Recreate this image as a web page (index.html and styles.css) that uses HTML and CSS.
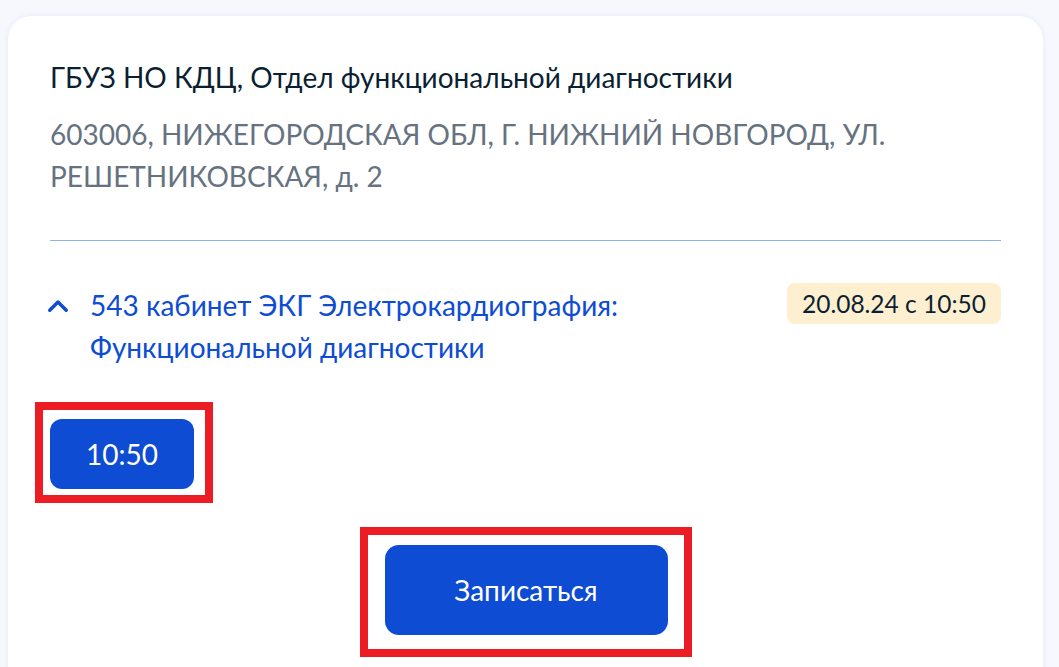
FILE: index.html
```html
<!DOCTYPE html>
<html lang="ru">
<head>
<meta charset="utf-8">
<title>Запись</title>
<link rel="stylesheet" href="styles.css">
</head>
<body>
<div class="card">
  <p class="org">ГБУЗ НО КДЦ, Отдел функциональной диагностики</p>
  <p class="addr">603006, НИЖЕГОРОДСКАЯ ОБЛ, Г. НИЖНИЙ НОВГОРОД, УЛ. РЕШЕТНИКОВСКАЯ, д. 2</p>
  <div class="divider"></div>
  <div class="acc">
    <div class="acc-head">
      <svg class="chev" width="24" height="24" viewBox="0 0 24 24"><polyline points="3.75,17.25 12,9 20.25,17.25" fill="none" stroke="#0d4cd3" stroke-width="3.5" stroke-linecap="round" stroke-linejoin="round"/></svg>
      <span class="acc-title">543 кабинет ЭКГ Электрокардиография: Функциональной диагностики</span>
    </div>
    <span class="badge">20.08.24 с 10:50</span>
  </div>
  <div class="slots">
    <div class="mark mark-slot"><button class="slot">10:50</button></div>
  </div>
  <div class="submit-row">
    <div class="mark mark-submit"><button class="submit">Записаться</button></div>
  </div>
</div>
</body>
</html>
```
FILE: styles.css
```css
* { box-sizing: border-box; }
html, body { margin: 0; }
body {
  background: #f6f8fd;
  padding: 16px 16px 0 8px;
  font-family: Lato, "Noto Sans", sans-serif;
  font-size: 28px;
  line-height: 42px;
  color: #0b1f33;
}
.card {
  background: #fff;
  border-radius: 24px;
  padding: 40px 42px 60px;
  box-shadow: 0 0 6px rgba(160, 180, 230, 0.18);
}
.org { margin: 0; color: #0b1f33; }
.addr { margin: 15px 0 0; color: #66727f; }
.divider { height: 1px; background: #8fb0ea; margin-top: 43px; }
.acc {
  margin-top: 43px;
  display: flex;
  justify-content: space-between;
  align-items: flex-start;
  gap: 40px;
}
.acc-head { display: flex; align-items: flex-start; flex: 1; }
.chev { flex: none; margin: 9px 20px 0 -4px; }
.acc-title { color: #0d4cd3; }
.badge {
  flex: none;
  background: #fdefcf;
  border-radius: 8px;
  padding: 4px 15px;
  font-size: 24.5px;
  line-height: 33px;
  color: #0b1f33;
  margin-top: -1px;
}
.slots { display: flex; margin-top: 34px; margin-left: -15px; }
.mark { border: 8px solid #ec1c24; display: inline-flex; }
.mark-slot { padding: 9px 11px 6px 7px; }
button {
  font-family: inherit;
  border: none;
  color: #fff;
  background: #0d4cd3;
  cursor: pointer;
}
.slot {
  width: 144px;
  height: 70px;
  border-radius: 12px;
  font-size: 28px;
}
.submit-row { display: flex; justify-content: center; margin-top: 24px; }
.mark-submit { padding: 10px 16px 14px 17px; }
.submit {
  width: 283px;
  height: 90px;
  border-radius: 14px;
  font-size: 28px;
}
```
